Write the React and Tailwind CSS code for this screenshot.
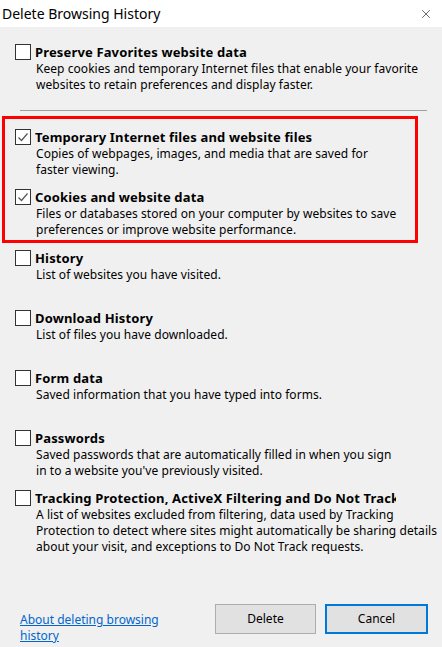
import { X } from "lucide-react";

const items = [
  {
    title: "History",
    lines: ["List of websites you have visited."],
  },
  {
    title: "Download History",
    lines: ["List of files you have downloaded."],
  },
  {
    title: "Form data",
    lines: ["Saved information that you have typed into forms."],
  },
  {
    title: "Passwords",
    lines: [
      "Saved passwords that are automatically filled in when you sign",
      "in to a website you've previously visited.",
    ],
  },
  {
    title: "Tracking Protection, ActiveX Filtering and Do Not Track data",
    lines: [
      "A list of websites excluded from filtering, data used by Tracking",
      "Protection to detect where sites might automatically be sharing details",
      "about your visit, and exceptions to Do Not Track requests.",
    ],
  },
];

const CheckBox = ({ checked }) => (
  <div className="mt-px flex h-[16px] w-[16px] shrink-0 items-center justify-center border border-[#333333] bg-white">
    {checked && (
      <svg width="14" height="14" viewBox="0 0 14 14" fill="none">
        <path d="M2.5 7.5 L5.5 10.5 L11.5 3.5" stroke="#555555" strokeWidth="1.2" />
      </svg>
    )}
  </div>
);

const Option = ({ title, lines, checked, className = "" }) => (
  <div className={`flex shrink-0 gap-[4px] ${className}`}>
    <CheckBox checked={checked} />
    <div className="flex min-w-0 flex-col">
      <p className="w-[361px] shrink-0 overflow-hidden whitespace-nowrap text-[13px] font-bold leading-[18px] tracking-[0.15px] text-black">
        {title}
      </p>
      <div className="shrink-0 pl-px text-[12px] leading-[16px] tracking-[0.05px] text-black">
        {lines.map((line) => (
          <p key={line} className="whitespace-nowrap">
            {line}
          </p>
        ))}
      </div>
    </div>
  </div>
);

export default function App() {
  return (
    <div
      className="flex h-[647px] w-[442px] flex-col overflow-hidden bg-[#f0f0f0]"
      style={{ fontFamily: '"Noto Sans", "Open Sans", sans-serif' }}
    >
      <div className="flex h-[27px] shrink-0 items-center justify-between bg-white pl-[2px] pr-[9px]">
        <span className="text-[14px] leading-none text-black">Delete Browsing History</span>
        <X size={14} strokeWidth={1} className="text-black" />
      </div>

      <div className="pl-[15px] pt-[16px]">
        <Option
          title="Preserve Favorites website data"
          lines={[
            "Keep cookies and temporary Internet files that enable your favorite",
            "websites to retain preferences and display faster.",
          ]}
        />
      </div>

      <div className="ml-[20px] mt-[17px] h-px w-[407px] shrink-0 bg-[#a0a0a0]" />

      <div className="ml-[2px] mt-[5px] w-[416px] shrink-0 border-[3px] border-[#ff0000] pb-[2px] pl-[10px] pt-[9px]">
        <Option
          checked
          className="h-[60px]"
          title="Temporary Internet files and website files"
          lines={["Copies of webpages, images, and media that are saved for", "faster viewing."]}
        />
        <Option
          checked
          title="Cookies and website data"
          lines={[
            "Files or databases stored on your computer by websites to save",
            "preferences or improve website performance.",
          ]}
        />
      </div>

      <div className="mt-[6px] flex shrink-0 flex-col pl-[15px]">
        {items.map((item, i) => (
          <Option
            key={item.title}
            className={i < items.length - 1 ? "h-[60px]" : ""}
            title={item.title}
            lines={item.lines}
          />
        ))}
      </div>

      <div className="flex-1" />

      <div className="flex h-[43px] shrink-0 items-start justify-between pl-[20px] pr-[14px]">
        <a href="#" className="mt-[8px] text-[12px] leading-[16px] text-[#0066cc] underline">
          About deleting browsing
          <br />
          history
        </a>
        <div className="flex gap-[9px]">
          <button className="h-[30px] w-[101px] border border-[#adadad] bg-[#e1e1e1] text-[12px] text-black">
            Delete
          </button>
          <button className="h-[30px] w-[103px] border-2 border-[#0078d7] bg-[#e1e1e1] text-[12px] text-black">
            Cancel
          </button>
        </div>
      </div>
    </div>
  );
}
